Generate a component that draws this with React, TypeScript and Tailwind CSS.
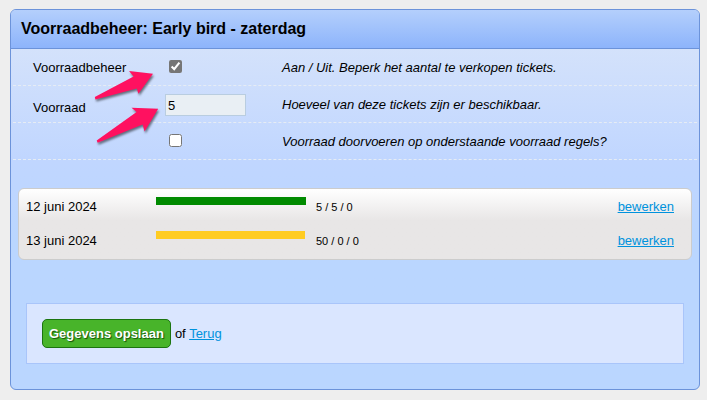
import type { ReactNode } from "react";

type SettingRowProps = {
  label?: ReactNode;
  control: ReactNode;
  description: string;
};

function SettingRow({ label, control, description }: SettingRowProps) {
  return (
    <div className="flex h-[37px] items-center border-b border-dashed border-[#e6ecf4] pl-5">
      <div className="w-33 shrink-0 pt-[2px]">{label}</div>
      <div className="flex w-[117px] shrink-0 items-center">{control}</div>
      <p className="pt-[2px] italic">{description}</p>
    </div>
  );
}

const stock = [
  { date: "12 juni 2024", counts: "5 / 5 / 0", bar: "w-[150px] bg-[#008a00]" },
  { date: "13 juni 2024", counts: "50 / 0 / 0", bar: "w-[149px] bg-[#ffcc22]" },
];

function Arrows() {
  return (
    <svg
      className="pointer-events-none absolute top-[49px] left-[74px] drop-shadow-[1px_2px_1px_rgba(0,0,0,0.5)]"
      width="100"
      height="90"
      viewBox="85 59 100 90"
      fill="#ff1160"
      aria-hidden="true"
    >
      <path d="M94.8 97 L133.6 76.6 L129 71 L153 73.8 L138.4 93.8 L136.8 88.4 L95.4 99.6 Z" />
      <path d="M96.7 140.5 L136.6 112 L131.5 107.8 L158.2 108.8 L144.6 131.5 L142.6 124.6 L97.7 142.8 Z" />
    </svg>
  );
}

export default function App() {
  return (
    <div className="min-h-screen bg-[#eeeeee] pt-[9px] pr-[7px] pb-[10px] pl-[10px] font-['Liberation_Sans',Arial,sans-serif] text-[13px] leading-4 text-black">
      <main className="relative rounded-md border border-[#6c93da] bg-[#bad6ff] bg-linear-to-b from-[#d4e2fb] from-10% via-[#c0d6ff] via-40% to-[#bad6ff] to-60% pb-[25px]">
        <h1 className="h-[39px] rounded-t-[5px] border-b border-[#6c93da] bg-linear-to-b from-[#b4cffc] to-[#8db4fb] px-[10px] text-base leading-[38px] font-bold">
          Voorraadbeheer: Early bird - zaterdag
        </h1>

        <form onSubmit={(event) => event.preventDefault()}>
          <div className="px-[2px]">
            <SettingRow
              label={<label htmlFor="manage">Voorraadbeheer</label>}
              control={
                <input
                  id="manage"
                  type="checkbox"
                  defaultChecked
                  className="mb-[2px] ml-1 size-[13px] accent-[#767676]"
                />
              }
              description="Aan / Uit. Beperk het aantal te verkopen tickets."
            />
            <SettingRow
              label={
                <label htmlFor="amount" className="block pt-[6px]">
                  Voorraad
                </label>
              }
              control={
                <input
                  id="amount"
                  type="text"
                  defaultValue="5"
                  className="mt-[2px] h-[22px] w-[81px] border border-[#b9cde0] bg-[#e9eff4] px-[2px] text-[13px]"
                />
              }
              description="Hoeveel van deze tickets zijn er beschikbaar."
            />
            <SettingRow
              control={
                <input
                  type="checkbox"
                  aria-label="Voorraad doorvoeren"
                  className="mb-[2px] ml-1 size-[13px] accent-[#767676]"
                />
              }
              description="Voorraad doorvoeren op onderstaande voorraad regels?"
            />
          </div>

          <ul className="mx-[7px] mt-7 rounded-md border border-[#cccccc] bg-linear-to-b from-white to-[#e8e6e6] to-45% pb-[2px]">
            {stock.map((item) => (
              <li key={item.date} className="flex h-[34px] items-center pr-[17px] pl-[7px]">
                <span className="w-[130px] shrink-0 pt-[2px]">{item.date}</span>
                <div className="mb-[10px] w-[160px] shrink-0">
                  <div className={`h-2 ${item.bar}`} />
                </div>
                <span className="grow pt-[2px] text-[11px]">{item.counts}</span>
                <a href="#bewerken" className="pt-[2px] text-[#0092dd] underline">
                  bewerken
                </a>
              </li>
            ))}
          </ul>

          <div className="mx-[15px] mt-[43px] flex items-center gap-1 border border-[#a9c5fa] bg-[#dae6ff] p-[15px]">
            <button
              type="submit"
              className="h-[29px] rounded-[5px] border border-[#1c7410] bg-[#48b42a] px-[6px] font-bold text-white text-shadow-[1px_1px_1px_#14500a]"
            >
              Gegevens opslaan
            </button>
            <span>
              of{" "}
              <a href="#terug" className="text-[#0092dd] underline">
                Terug
              </a>
            </span>
          </div>
        </form>

        <Arrows />
      </main>
    </div>
  );
}
